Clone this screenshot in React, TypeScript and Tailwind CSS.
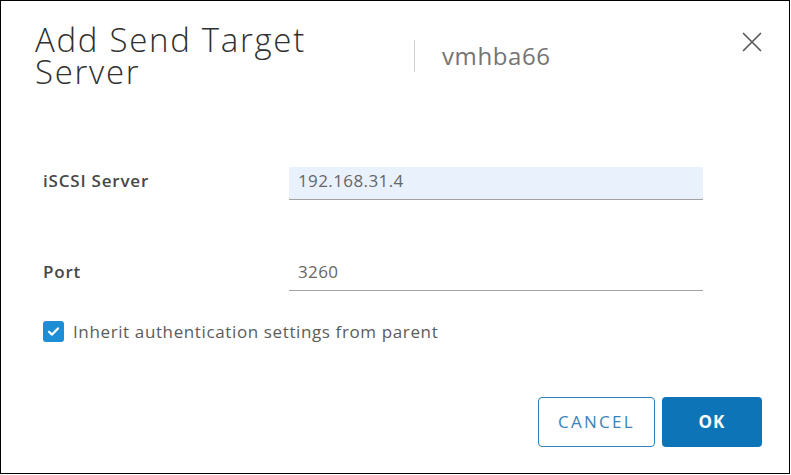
import React from "react";

function CloseIcon() {
  return (
    <svg width="20" height="20" viewBox="0 0 20 20" fill="none">
      <path d="M1.5 1.5L18.5 18.5M18.5 1.5L1.5 18.5" stroke="#5a5a5a" strokeWidth="1.7" strokeLinecap="round" />
    </svg>
  );
}

function FormRow({ label, value, filled }: { label: string; value: string; filled?: boolean }) {
  return (
    <div className="flex h-[33px] items-stretch pl-[42px]">
      <label className="flex w-[246px] items-center pb-[6px] text-[17px] font-semibold tracking-[0.8px] text-[#474747]">
        {label}
      </label>
      <div
        className={`flex w-[414px] items-center border-b border-[#a3a3a3] pb-[5px] pl-[9px] text-[17px] tracking-[0.4px] text-[#666] ${
          filled ? "bg-[#e9f2fc]" : "bg-white"
        }`}
      >
        {value}
      </div>
    </div>
  );
}

export default function App() {
  return (
    <div
      className="flex h-[474px] w-[790px] flex-col border border-black bg-white"
      style={{ fontFamily: '"Open Sans", "Liberation Sans", sans-serif' }}
    >
      {/* Header */}
      <div className="flex items-start pl-[34px] pr-[27px] pt-[23px]">
        <h1 className="w-[379px] pr-[50px] text-[33px] font-[350] leading-[32px] tracking-[1.7px] text-[#303030]">
          Add Send Target Server
        </h1>
        <div className="mt-[16px] h-[32px] border-l border-[#d0d0d0] pl-[27px] text-[24px] leading-[32px] tracking-[0.6px] text-[#747474]">
          vmhba66
        </div>
        <button className="ml-auto mt-[8px]">
          <CloseIcon />
        </button>
      </div>

      {/* Body */}
      <div className="mt-[79px]">
        <FormRow label="iSCSI Server" value="192.168.31.4" filled />
      </div>
      <div className="mt-[58px]">
        <FormRow label="Port" value="3260" />
      </div>

      <div className="mt-[30px] flex h-[21px] items-center gap-[9px] pl-[42px]">
        <div className="flex h-[21px] w-[21px] items-center justify-center rounded-[3px] bg-[#1d8dd6]">
          <svg width="13" height="11" viewBox="0 0 13 11" fill="none">
            <path d="M2 5.8L5 8.6L11 2.4" stroke="white" strokeWidth="2.2" strokeLinecap="round" strokeLinejoin="round" />
          </svg>
        </div>
        <span className="text-[17px] tracking-[0.62px] text-[#5c5c5c]">Inherit authentication settings from parent</span>
      </div>

      {/* Footer */}
      <div className="mt-[55px] flex justify-end gap-[7px] pr-[27px]">
        <button className="h-[50px] w-[117px] rounded-[4px] border border-[#2a82bd] text-[17px] font-medium tracking-[2.3px] text-[#3a84b8]">
          CANCEL
        </button>
        <button className="h-[50px] w-[100px] rounded-[4px] bg-[#0e74b8] text-[17px] font-bold tracking-[1px] text-white">
          OK
        </button>
      </div>
    </div>
  );
}
